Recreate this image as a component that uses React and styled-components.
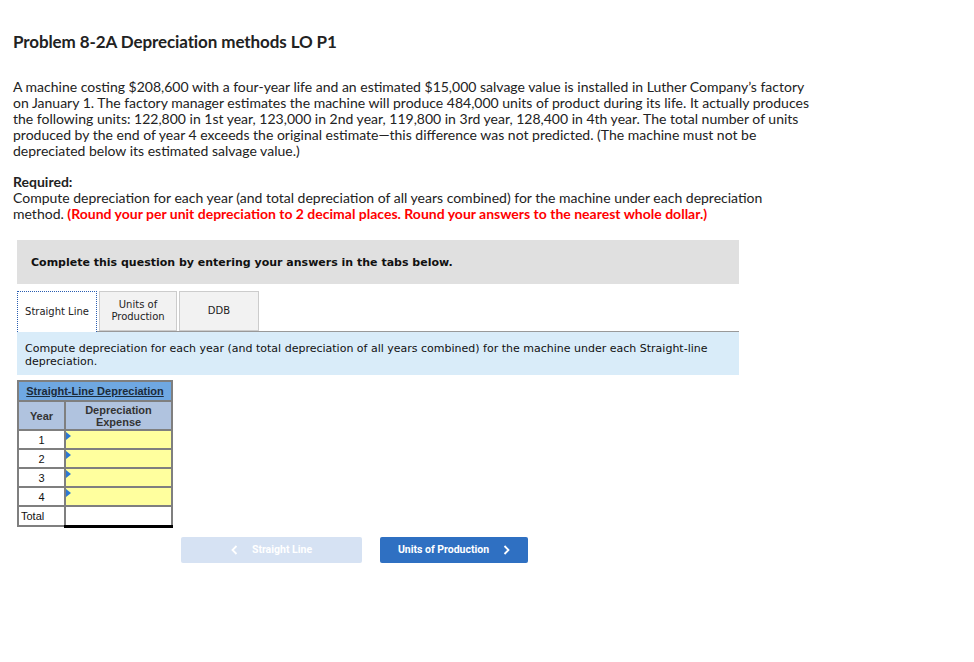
import React from "react";
import styled, { createGlobalStyle } from "styled-components";

const Global = createGlobalStyle`
  html, body { margin: 0; padding: 0; background: #fff; }
  body { font-family: Lato, "Open Sans", sans-serif; color: #222; }
`;

const Page = styled.div`
  padding: 31px 13px 40px 13px;
  width: 808px;
`;

const Title = styled.h1`
  font-family: Lato, sans-serif;
  font-weight: 700;
  font-size: 17px;
  margin: 0 0 27px 0;
  color: #222;
  letter-spacing: -0.1px;
`;

const Para = styled.p`
  font-size: 14px;
  line-height: 16px;
  margin: 0;
  color: #222;
`;

const Required = styled.div`
  margin-top: 15px;
  font-size: 14px;
  line-height: 16px;
  width: 780px;
`;

const Bold = styled.div`
  font-weight: 700;
`;

const Red = styled.span`
  color: #f00;
  font-weight: 700;
`;

const Work = styled.div`
  margin-top: 18px;
  margin-left: 4px;
  width: 722px;
  font-family: Verdana, "DejaVu Sans", sans-serif;
`;

const Banner = styled.div`
  background: #e0e0e0;
  height: 44px;
  display: flex;
  align-items: center;
  padding-left: 14px;
  font-size: 11px;
  font-weight: 700;
  color: #111;
`;

const Tabs = styled.div`
  display: flex;
  gap: 2px;
  margin-top: 7px;
  height: 40px;
  border-bottom: 1px solid #999;
`;

const Tab = styled.div`
  width: ${(p) => p.$w}px;
  box-sizing: border-box;
  display: flex;
  align-items: center;
  justify-content: center;
  text-align: center;
  font-size: 10px;
  line-height: 12px;
  color: #222;
  background: ${(p) => (p.$active ? "#fff" : "#f2f2f2")};
  border: ${(p) => (p.$active ? "1px dotted #2a5db0" : "1px solid #ccc")};
  border-bottom: ${(p) => (p.$active ? "none" : "1px solid #ccc")};
  margin-bottom: ${(p) => (p.$active ? "-1px" : "0")};
  position: relative;
  z-index: 1;
`;

const Instr = styled.div`
  background: #d9ecf9;
  padding: 10px 8px 8px 8px;
  font-size: 11px;
  line-height: 13px;
  color: #111;
  height: 43px;
  box-sizing: border-box;
`;

const Table = styled.table`
  border-collapse: collapse;
  margin-top: 5px;
  font-family: Arial, "Liberation Sans", sans-serif;
  font-size: 11px;
  color: #111;
`;

const Cap = styled.th`
  background: #6fa8e2;
  border: 2px solid #7f7f7f;
  height: 18px;
  padding: 0;
  font-weight: 700;
  font-size: 11px;
  text-decoration: underline;
  color: #1b2b3a;
`;

const Head = styled.th`
  background: #b0c3df;
  border: 2px solid #7f7f7f;
  height: 27px;
  padding: 0;
  font-weight: 700;
  font-size: 11px;
  line-height: 12px;
  color: #333;
  width: ${(p) => p.$w}px;
`;

const YearCell = styled.td`
  border: 2px solid #7f7f7f;
  height: ${(p) => (p.$left ? 18 : 17)}px;
  padding: 0 2px;
  text-align: ${(p) => (p.$left ? "left" : "center")};
  background: #fff;
`;

const InputCell = styled.td`
  border: 2px solid #7f7f7f;
  border-top: ${(p) => (p.$total ? "1px solid #000" : "2px solid #7f7f7f")};
  border-bottom: ${(p) => (p.$total ? "3px solid #000" : "2px solid #7f7f7f")};
  background: ${(p) => (p.$total ? "#fff" : "#ffff9e")};
  padding: 0;
  position: relative;
`;

const Marker = styled.span`
  position: absolute;
  left: 0;
  top: 1px;
  width: 0;
  height: 0;
  border-top: 4px solid transparent;
  border-bottom: 4px solid transparent;
  border-left: 5px solid #2d78d2;
`;

const Nav = styled.div`
  display: flex;
  gap: 18px;
  margin-top: 9px;
  margin-left: 168px;
`;

const NavBtn = styled.div`
  width: ${(p) => p.$w}px;
  height: 26px;
  border-radius: 2px;
  background: ${(p) => (p.$disabled ? "#d6e2f3" : "#2f70c2")};
  color: #fff;
  display: flex;
  align-items: center;
  justify-content: center;
  gap: 14px;
  font-family: Roboto, "Liberation Sans", sans-serif;
  font-weight: 700;
  font-size: 10.5px;
`;

const Chevron = ({ dir }) => (
  <svg width="7" height="10" viewBox="0 0 7 10">
    <path
      d={dir === "left" ? "M5.5 1 L1.5 5 L5.5 9" : "M1.5 1 L5.5 5 L1.5 9"}
      fill="none"
      stroke="#fff"
      strokeWidth="1.8"
    />
  </svg>
);

export default function App() {
  return (
    <Page>
      <Global />
      <Title>Problem 8-2A Depreciation methods LO P1</Title>
      <Para>
        A machine costing $208,600 with a four-year life and an estimated $15,000 salvage value is installed in Luther Company’s factory
        on January 1. The factory manager estimates the machine will produce 484,000 units of product during its life. It actually produces
        the following units: 122,800 in 1st year, 123,000 in 2nd year, 119,800 in 3rd year, 128,400 in 4th year. The total number of units
        produced by the end of year 4 exceeds the original estimate—this difference was not predicted. (The machine must not be
        depreciated below its estimated salvage value.)
      </Para>
      <Required>
        <Bold>Required:</Bold>
        Compute depreciation for each year (and total depreciation of all years combined) for the machine under each depreciation
        method. <Red>(Round your per unit depreciation to 2 decimal places. Round your answers to the nearest whole dollar.)</Red>
      </Required>
      <Work>
        <Banner>Complete this question by entering your answers in the tabs below.</Banner>
        <Tabs>
          <Tab $active $w={80}>Straight Line</Tab>
          <Tab $w={78}>Units of<br />Production</Tab>
          <Tab $w={80}>DDB</Tab>
        </Tabs>
        <Instr>
          Compute depreciation for each year (and total depreciation of all years combined) for the machine under each Straight-line
          depreciation.
        </Instr>
        <Table>
          <thead>
            <tr>
              <Cap colSpan={2}>Straight-Line Depreciation</Cap>
            </tr>
            <tr>
              <Head $w={45}>Year</Head>
              <Head $w={105}>Depreciation<br />Expense</Head>
            </tr>
          </thead>
          <tbody>
            {[1, 2, 3, 4].map((y) => (
              <tr key={y}>
                <YearCell>{y}</YearCell>
                <InputCell><Marker /></InputCell>
              </tr>
            ))}
            <tr>
              <YearCell $left>Total</YearCell>
              <InputCell $total />
            </tr>
          </tbody>
        </Table>
      </Work>
      <Nav>
        <NavBtn $disabled $w={181}><Chevron dir="left" />Straight Line</NavBtn>
        <NavBtn $w={148}>Units of Production<Chevron dir="right" /></NavBtn>
      </Nav>
    </Page>
  );
}
